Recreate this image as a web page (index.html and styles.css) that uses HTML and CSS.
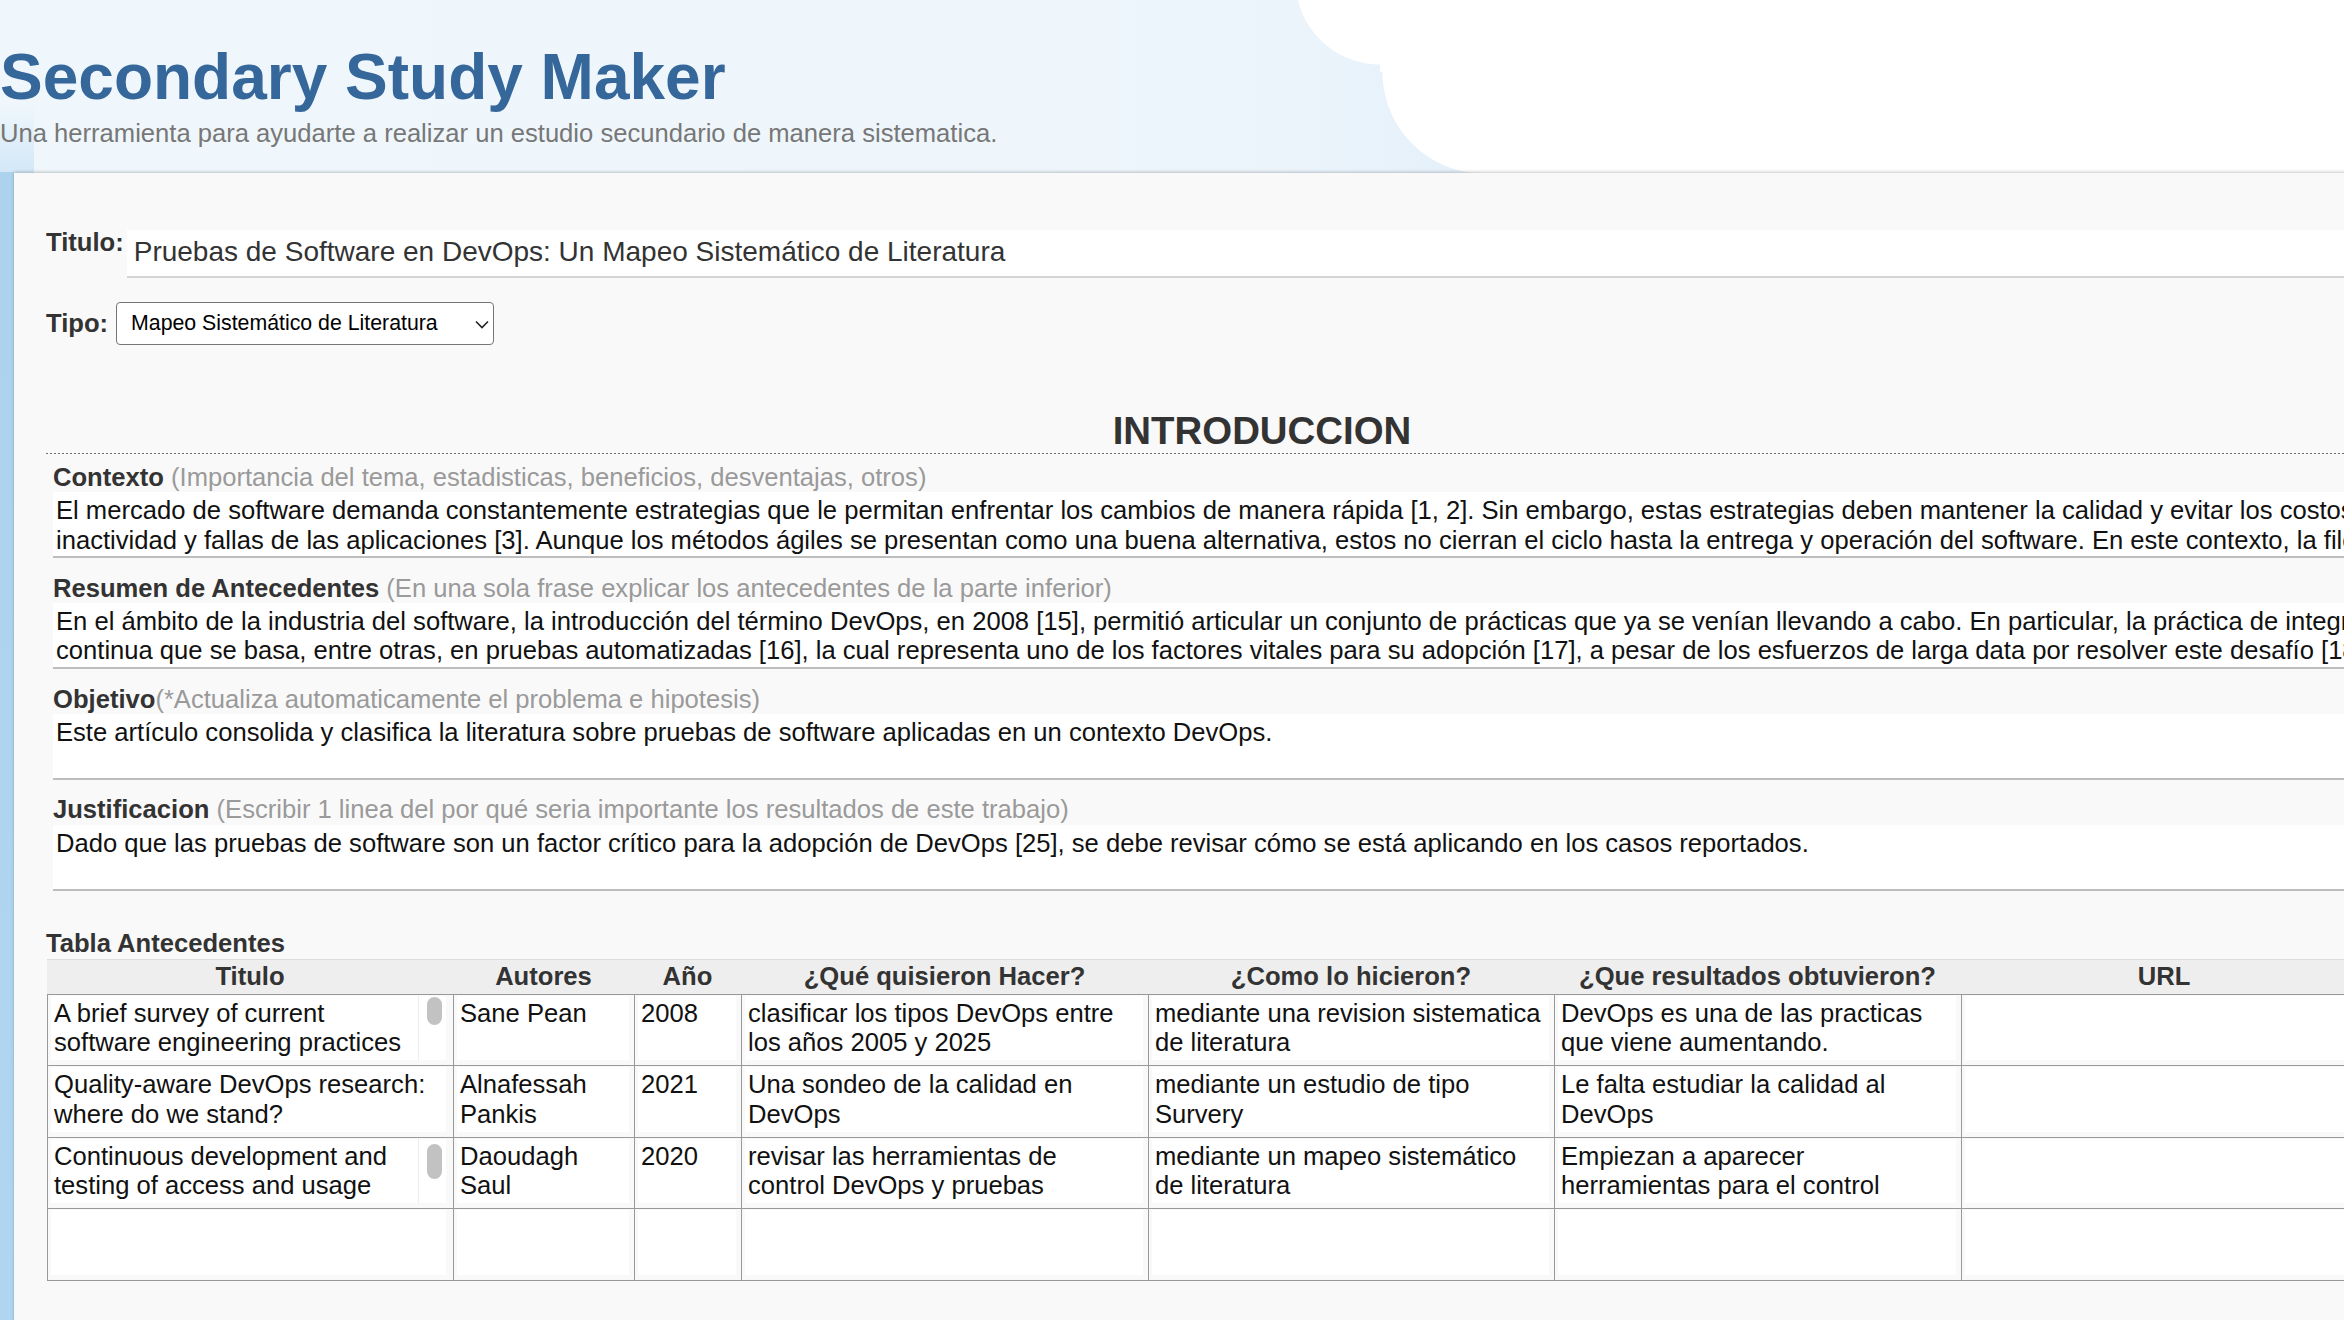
FILE: index.html
```html
<!DOCTYPE html>
<html lang="es">
<head>
<meta charset="utf-8">
<title>Secondary Study Maker</title>
<link rel="stylesheet" href="styles.css">
</head>
<body>
<header class="site-header">
  <h1 class="site-title">Secondary Study Maker</h1>
  <p class="site-sub">Una herramienta para ayudarte a realizar un estudio secundario de manera sistematica.</p>
</header>

<main class="panel">
  <div class="field-row title-row">
    <label class="field-label title-label">Titulo:</label>
    <div class="title-input">Pruebas de Software en DevOps: Un Mapeo Sistemático de Literatura</div>
  </div>

  <div class="field-row type-row">
    <label class="field-label">Tipo:</label>
    <div class="select">
      <span class="select-text">Mapeo Sistemático de Literatura</span>
      <svg class="select-chevron" width="14" height="9" viewBox="0 0 14 9"><polyline points="1,1.5 7,7.5 13,1.5" fill="none" stroke="#222" stroke-width="1.6"/></svg>
    </div>
  </div>

  <h2 class="section-title">INTRODUCCION</h2>

  <section class="block first">
    <div class="block-label"><b>Contexto</b> <span class="hint">(Importancia del tema, estadisticas, beneficios, desventajas, otros)</span></div>
    <div class="area">
      <span class="line">El mercado de software demanda constantemente estrategias que le permitan enfrentar los cambios de manera rápida [1, 2]. Sin embargo, estas estrategias deben mantener la calidad y evitar los costos de</span>
      <span class="line">inactividad y fallas de las aplicaciones [3]. Aunque los métodos ágiles se presentan como una buena alternativa, estos no cierran el ciclo hasta la entrega y operación del software. En este contexto, la filosofía DevOps</span>
    </div>
  </section>

  <section class="block">
    <div class="block-label"><b>Resumen de Antecedentes</b> <span class="hint">(En una sola frase explicar los antecedentes de la parte inferior)</span></div>
    <div class="area">
      <span class="line">En el ámbito de la industria del software, la introducción del término DevOps, en 2008 [15], permitió articular un conjunto de prácticas que ya se venían llevando a cabo. En particular, la práctica de integración</span>
      <span class="line">continua que se basa, entre otras, en pruebas automatizadas [16], la cual representa uno de los factores vitales para su adopción [17], a pesar de los esfuerzos de larga data por resolver este desafío [18].</span>
    </div>
  </section>

  <section class="block">
    <div class="block-label"><b>Objetivo</b><span class="hint">(*Actualiza automaticamente el problema e hipotesis)</span></div>
    <div class="area">
      <span class="line">Este artículo consolida y clasifica la literatura sobre pruebas de software aplicadas en un contexto DevOps.</span>
    </div>
  </section>

  <section class="block">
    <div class="block-label"><b>Justificacion</b> <span class="hint">(Escribir 1 linea del por qué seria importante los resultados de este trabajo)</span></div>
    <div class="area">
      <span class="line">Dado que las pruebas de software son un factor crítico para la adopción de DevOps [25], se debe revisar cómo se está aplicando en los casos reportados.</span>
    </div>
  </section>

  <div class="table-title">Tabla Antecedentes</div>
  <div class="ant-table">
    <div class="th">Titulo</div>
    <div class="th">Autores</div>
    <div class="th">Año</div>
    <div class="th">¿Qué quisieron Hacer?</div>
    <div class="th">¿Como lo hicieron?</div>
    <div class="th">¿Que resultados obtuvieron?</div>
    <div class="th">URL</div>

    <div class="td"><div class="ta scroll"><span class="line">A brief survey of current</span><span class="line">software engineering practices</span><span class="sb-track"><span class="sb-thumb thumb-a"></span></span></div></div>
    <div class="td"><div class="ta"><span class="line">Sane Pean</span></div></div>
    <div class="td"><div class="ta"><span class="line">2008</span></div></div>
    <div class="td"><div class="ta"><span class="line">clasificar los tipos DevOps entre</span><span class="line">los años 2005 y 2025</span></div></div>
    <div class="td"><div class="ta"><span class="line">mediante una revision sistematica</span><span class="line">de literatura</span></div></div>
    <div class="td"><div class="ta"><span class="line">DevOps es una de las practicas</span><span class="line">que viene aumentando.</span></div></div>
    <div class="td"><div class="ta"></div></div>

    <div class="td"><div class="ta"><span class="line">Quality-aware DevOps research:</span><span class="line">where do we stand?</span></div></div>
    <div class="td"><div class="ta"><span class="line">Alnafessah</span><span class="line">Pankis</span></div></div>
    <div class="td"><div class="ta"><span class="line">2021</span></div></div>
    <div class="td"><div class="ta"><span class="line">Una sondeo de la calidad en</span><span class="line">DevOps</span></div></div>
    <div class="td"><div class="ta"><span class="line">mediante un estudio de tipo</span><span class="line">Survery</span></div></div>
    <div class="td"><div class="ta"><span class="line">Le falta estudiar la calidad al</span><span class="line">DevOps</span></div></div>
    <div class="td"><div class="ta"></div></div>

    <div class="td"><div class="ta scroll"><span class="line">Continuous development and</span><span class="line">testing of access and usage</span><span class="sb-track"><span class="sb-thumb thumb-b"></span></span></div></div>
    <div class="td"><div class="ta"><span class="line">Daoudagh</span><span class="line">Saul</span></div></div>
    <div class="td"><div class="ta"><span class="line">2020</span></div></div>
    <div class="td"><div class="ta"><span class="line">revisar las herramientas de</span><span class="line">control DevOps y pruebas</span></div></div>
    <div class="td"><div class="ta"><span class="line">mediante un mapeo sistemático</span><span class="line">de literatura</span></div></div>
    <div class="td"><div class="ta"><span class="line">Empiezan a aparecer</span><span class="line">herramientas para el control</span></div></div>
    <div class="td"><div class="ta"></div></div>

    <div class="td"><div class="ta"></div></div>
    <div class="td"><div class="ta"></div></div>
    <div class="td"><div class="ta"></div></div>
    <div class="td"><div class="ta"></div></div>
    <div class="td"><div class="ta"></div></div>
    <div class="td"><div class="ta"></div></div>
    <div class="td"><div class="ta"></div></div>
  </div>
</main>
</body>
</html>
```

FILE: styles.css
```css
* {
  box-sizing: border-box;
}

html {
  overflow: hidden;
  background-color: #fff;
  background-image:
    linear-gradient(#acd2ee, #b1d6f1),
    linear-gradient(180deg, rgba(206, 229, 247, 0) 0, #d2e7f7 100%),
    radial-gradient(circle at 1380px -20px, #fff 0 84px, rgba(255, 255, 255, 0) 85px),
    radial-gradient(circle at 1484px 72px, #fff 0 101px, rgba(255, 255, 255, 0) 102px),
    linear-gradient(90deg, rgba(255, 255, 255, 0) 1380px, #fff 1380px),
    linear-gradient(90deg, rgba(255, 255, 255, 0) 1484px, #fff 1484px),
    linear-gradient(90deg, #eff7fc 0, #eef6fc 1000px, #ebf4fb 1300px, #e4f0fa 1470px, #e4f0fa 100%);
  background-size: 14px 100%, 34px 70px, auto, auto, 100% 72px, auto, auto;
  background-position: 0 172px, 0 104px, 0 0, 0 0, 0 0, 0 0, 0 0;
  background-repeat: no-repeat;
}

body {
  margin: 0;
  width: 2520px;
  font-family: "Liberation Sans", Arial, Helvetica, sans-serif;
  font-size: 25.6px;
  color: #333;
}

/* ---------- header ---------- */
.site-title {
  margin: 40px 0 0;
  font-size: 64px;
  font-weight: bold;
  line-height: normal;
  color: #35679a;
}

.site-sub {
  margin: 5px 0 25px;
  font-size: 25.6px;
  line-height: normal;
  color: #777;
}

/* ---------- panel ---------- */
.panel {
  display: block;
  width: 2496px;
  min-height: 1240px;
  margin-left: 14px;
  padding: 57px 32px 60px;
  background: #f9f9f9;
  box-shadow: 0 -1px 3px rgba(0, 0, 0, 0.22);
}

.field-row {
  display: flex;
}

.title-row {
  align-items: flex-start;
}

.type-row {
  align-items: center;
  margin-top: 24px;
}

.field-label {
  font-weight: bold;
  color: #333;
  line-height: 29.4px;
}

.title-label {
  margin-top: -2px;
  margin-right: 3px;
}

.title-input {
  flex: 1;
  padding: 6px 7px 8px;
  background: #fff;
  border-bottom: 2px solid #d4d4d4;
  font-size: 28px;
  line-height: normal;
  color: #333;
  white-space: nowrap;
}

.select {
  display: flex;
  align-items: center;
  justify-content: space-between;
  width: 378px;
  height: 43px;
  margin-left: 8px;
  padding: 0 4px 0 14px;
  background: #fff;
  border: 1px solid #767676;
  border-radius: 4px;
  font-size: 21.3px;
  color: #000;
}

.select-chevron {
  display: block;
  margin-top: 2px;
}

/* ---------- introduction ---------- */
.section-title {
  position: relative;
  margin: 64px 0 0;
  font-size: 38.4px;
  font-weight: bold;
  line-height: normal;
  text-align: center;
  color: #333;
  padding-bottom: 1px;
}

.section-title::after {
  content: "";
  position: absolute;
  left: 0;
  right: 0;
  bottom: 0;
  height: 1px;
  background: repeating-linear-gradient(90deg, #6d6d6d 0 2px, transparent 2px 4px);
}

.block {
  margin: 0 0 15.6px 7px;
}

.block.first {
  margin-top: 9px;
}

.block-label {
  line-height: 29.4px;
  white-space: nowrap;
  color: #333;
}

.hint {
  color: #9a9a9a;
}

.area {
  height: 65.8px;
  padding: 3.8px 3px 1.2px;
  background: #fff;
  border-bottom: 2px solid #bdbdbd;
  color: #111;
  line-height: 29.4px;
  overflow: hidden;
}

.line {
  display: block;
  white-space: nowrap;
}

/* ---------- table ---------- */
.table-title {
  margin-top: 38.5px;
  font-weight: bold;
  color: #333;
  line-height: 29.4px;
}

.ant-table {
  display: grid;
  grid-template-columns: 406px 181px 107px 407px 406px 407px 406px;
  margin: 0.5px 0 0 1px;
}

.th {
  padding: 2.4px 0 2px;
  background: #eeeeee;
  border-top: 1px solid #dcdcdc;
  border-bottom: 1px solid #999;
  font-weight: bold;
  text-align: center;
  line-height: 29.4px;
  color: #333;
  white-space: nowrap;
}

.td {
  padding: 1px 5px 5px 3px;
  border-left: 1px solid #999;
  border-bottom: 1px solid #999;
}

.td:nth-child(7n+1) {
  padding-right: 7px;
}

.ta {
  position: relative;
  height: 64.5px;
  padding: 3.2px 3px 2.8px;
  background: #fff;
  color: #111;
  line-height: 29.4px;
  overflow: hidden;
}

.sb-track {
  position: absolute;
  top: 0;
  right: 0;
  bottom: 0;
  width: 28px;
  background: #fff;
  border-left: 1px solid #ececec;
}

.sb-thumb {
  position: absolute;
  left: 8px;
  width: 15px;
  border-radius: 8px;
  background: #c2c2c2;
}

.thumb-a {
  top: 1px;
  height: 28px;
}

.thumb-b {
  top: 5px;
  height: 35px;
}
```
